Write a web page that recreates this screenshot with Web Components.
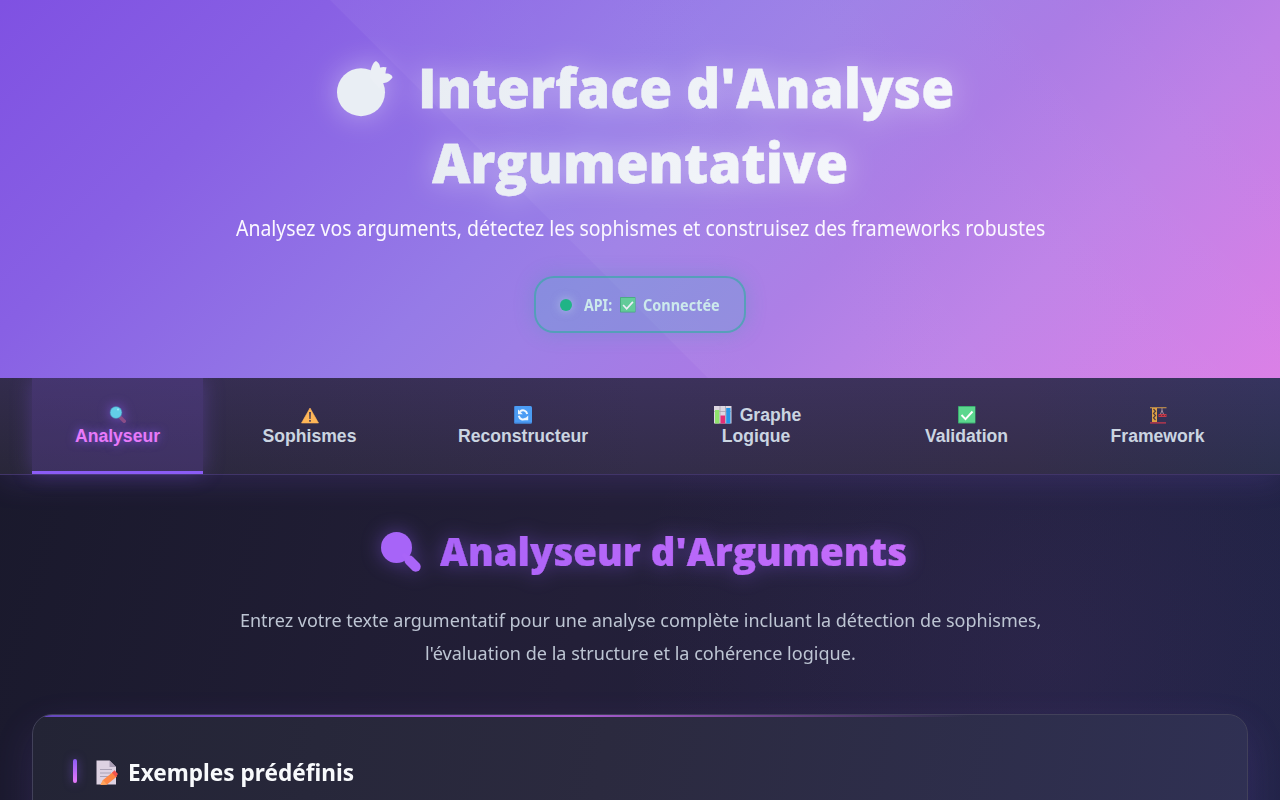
<!DOCTYPE html>
<html lang="fr">
<head>
<meta charset="utf-8">
<title>Interface d'Analyse Argumentative</title>
<style>
html,body{margin:0;height:100%;overflow:hidden}
body{font-family:"Noto Sans","Open Sans",sans-serif;background:#1a1a2e}
</style>
</head>
<body>
<app-shell>
<app-header slot="header"></app-header>
<app-tabs slot="nav"></app-tabs>
<analyzer-panel></analyzer-panel>
</app-shell>
<script>
const icons={
fruit:`<svg viewBox="0 0 56 56"><circle cx="24" cy="31.2" r="24" fill="#e9eef4"/><path d="M33 17C33 8 36 1 39 0C42 2 43 4 43 6.500C46 5.500 48 6 49.500 6.300C49 9 48.500 11 48.500 12.500C52 12 55.500 14 55.500 16.500C52 21 49 22 46 22L42 27Z" fill="#ebeff5"/></svg>`,
lens:`<svg viewBox="0 0 40 40"><circle cx="15.500" cy="15.500" r="15.500" fill="#a764f8"/><path d="M28.500 28.500L34.700 34.700" stroke="#aa65f8" stroke-width="10" stroke-linecap="round"/><path d="M22 22l6 6" stroke="#a965f8" stroke-width="5"/></svg>`,
search:`<svg viewBox="0 0 18 18"><path d="M11 11l4.200 4.200" stroke="#8a4d87" stroke-width="3.600" stroke-linecap="round"/><circle cx="7" cy="6.500" r="6" fill="#62cfe8" stroke="#4a76a6" stroke-width=".6"/><circle cx="9" cy="3.500" r=".9" fill="#a5edfa"/></svg>`,
warning:`<svg viewBox="0 0 18 18"><path d="M9 2L17.500 17H.5Z" fill="#ffb657" stroke="#ffb657" stroke-width=".6" stroke-linejoin="round"/><path d="M8 6h2l-.3 7H8.300zM8.100 14h1.800v1.800H8.100z" fill="#574554"/></svg>`,
refresh:`<svg viewBox="0 0 18 18"><rect width="18" height="17.500" rx="1.500" fill="#4b9cf4"/><path d="M.5 .5V17H17.500" fill="none" stroke="#4283d5"/><path d="M6 5.500C9 3.200 12.500 4.500 13.200 8M4.800 9.800C5.500 13.300 9 14.600 12 12.200" fill="none" stroke="#eef7ff" stroke-width="2"/><path d="M4 3.500V8.300H8.800zM14.200 9.500v4.800H9.400z" fill="#eef7ff"/></svg>`,
chart:`<svg viewBox="0 0 18 18"><rect width="17.500" height="17.500" fill="#ddd7e1"/><path d="M0 5.500H17M6 0V17M11.500 0V17" stroke="#aaa2b1" stroke-width=".8"/><path d="M1 4h4.300v13.500H1z" fill="#8fe36d"/><path d="M6.500 9.500H11v8H6.500z" fill="#e52f76"/><path d="M12.200 2H16.500v15.500h-4.300z" fill="#2697e8"/></svg>`,
check:`<svg viewBox="0 0 18 18"><rect width="17.500" height="17.500" rx=".8" fill="#3cad70"/><rect x="1" y="1" width="16" height="15.500" fill="#5bd78e"/><path d="M3.500 9l4 4.200L14.500 5.500" fill="none" stroke="#fff" stroke-width="1.900"/></svg>`,
crane:`<svg viewBox="0 0 18 18"><path d="M1 1.700H17.500" stroke="#be8d4a" stroke-width="1.200"/><path d="M3 2H8V16H3z" fill="#dfa244"/><path d="M4.500 3l2 2.200-2 2.200 2 2.200-2 2.200 2 2.200" stroke="#4c3942" stroke-width="1.200" fill="none"/><path d="M13 2V5M11.500 8L13 4.500L14.500 8" stroke="#a48b9c" fill="none"/><path d="M9.500 8H17.500v3h-8z" fill="#c63a4a"/><path d="M10 9.500h7" stroke="#762e40" stroke-dasharray="2 1"/><path d="M1 16.900H17" stroke="#d1394d" stroke-width="1.200"/></svg>`,
note:`<svg viewBox="0 0 22 25"><path d="M.5 .5H13.500L20 7V24.500H.5z" fill="#ddd2e2"/><path d="M13.500 .5V7H20z" fill="#aa9eb5"/><path d="M4 9.500h12M4 13h11M4 16.500h8" stroke="#aaa1b5" stroke-width="1.100"/><path d="M7 20L17 12L21 16.500L11 24.500L4.500 25z" fill="#ff8744"/><path d="M16 12.800L18.500 10.200L22 14L19.800 17z" fill="#f4544d"/><path d="M7 20L11 24.500L4.500 25z" fill="#ffa55c"/></svg>`
};
function define(name,css,html,setup){
  customElements.define(name,class extends HTMLElement{
    constructor(){super();this.attachShadow({mode:'open'}).innerHTML=`<style>*,:host{box-sizing:border-box}${css}</style>${html}`}
    connectedCallback(){if(setup)setup(this)}
  });
}
define('ui-icon',':host{display:inline-block;flex:none;width:18px;height:18px}svg{display:block;width:100%;height:100%;overflow:visible}','<span></span>',el=>{
  el.shadowRoot.querySelector('span').innerHTML=icons[el.getAttribute('name')]||'';
});
/* Condenses or widens a single line of text so that it fills the requested width. */
define('fit-text',':host{display:block;white-space:nowrap}span{display:inline-block;transform-origin:0 50%}:host([grad]) span{background:var(--grad);-webkit-background-clip:text;background-clip:text;color:transparent;padding-bottom:.12em}','<span><slot></slot></span>',el=>{
  const s=el.shadowRoot.querySelector('span'),w=+el.getAttribute('w');
  s.style.transform=`scaleX(${w/s.offsetWidth})`;
  el.style.width=w+'px';
});
define('status-pill',`:host{display:flex;flex:none;align-items:center;width:212px;height:57px;border:2px solid rgba(46,170,160,.6);border-radius:20px;background:rgba(100,170,210,.33);box-shadow:0 0 20px rgba(60,150,180,.28);padding-left:24px;color:#cce9ec;font-size:15.200px;font-weight:700}
i{width:12px;height:12px;border-radius:50%;background:#20b486;box-shadow:0 0 10px rgba(210,240,240,.5);margin-right:12px}
ui-icon{width:16px;height:16px;margin:0 7px 0 8px;opacity:.85}`,
`<i></i><fit-text w="28">API:</fit-text><ui-icon name="check"></ui-icon><fit-text w="77">Connectée</fit-text>`);
define('app-header',`:host{display:flex;flex:none;flex-direction:column;align-items:center;height:378px;padding-top:50px;
background:linear-gradient(45deg,transparent 42.650%,rgba(255,255,255,.045) 42.750%,rgba(255,255,255,.03) 70%,transparent),linear-gradient(135deg,#7f51e2 0%,#8860e4 20%,#967be7 44%,#9d7fe6 52%,#aa7ae5 66%,#bd80e7 79%,#da7de6 100%)}
h1{margin:0;height:150px;font-family:"Open Sans","Noto Sans",sans-serif;font-kerning:none;font-size:54.500px;line-height:75px;font-weight:800;display:flex;flex-direction:column;align-items:center;filter:drop-shadow(0 0 15px rgba(255,255,255,.4));--grad:linear-gradient(100deg,#e8edf3,#f5f7fb)}
fit-text[grad]{-webkit-text-stroke:.3px #eef1f7}
.l{display:flex;height:75px}.l ui-icon{width:56px;height:56px;margin:11px 25px 0 0}.l.a{margin-left:10px}
p{margin:10px 0 30px;font-size:21px;line-height:36px;color:#fbf8ff}`,
`<h1><div class="l a"><ui-icon name="fruit"></ui-icon><fit-text grad w="536">Interface d'Analyse</fit-text></div><div class="l"><fit-text grad w="416">Argumentative</fit-text></div></h1>
<p><fit-text w="809">Analysez vos arguments, détectez les sophismes et construisez des frameworks robustes</fit-text></p><status-pill></status-pill>`);
define('app-tab',`:host{display:flex;flex-direction:column;align-items:center;padding-top:27px;height:96px;font:700 17.600px/21px "Liberation Sans",sans-serif;color:#cbd5e1}
.r{display:flex;height:21px;gap:8px}.r ui-icon{margin-top:1px}:host([icon=chart]) .r{margin-left:3px}
:host([active]){background:rgba(139,92,246,.2);border-bottom:3px solid #8b5cf6;box-shadow:0 0 20px rgba(139,92,246,.3);color:#e879f9;text-shadow:0 0 10px rgba(139,92,246,.8)}
:host([active]) ui-icon{filter:drop-shadow(0 0 6px rgba(139,92,246,.7))}`,
`<div class="r"><ui-icon></ui-icon><slot name="lead"></slot></div><slot></slot>`,
el=>{const i=el.shadowRoot.querySelector('ui-icon');i.setAttribute('name',el.getAttribute('icon'));i.connectedCallback()});
define('app-tabs',`:host{display:grid;flex:none;grid-template-columns:171px 181px 214px 220px 169px 181px;column-gap:16px;height:97px;padding:0 32px;border-bottom:1px solid #413569;background:linear-gradient(180deg,rgba(139,92,246,.11),rgba(90,70,130,.01)),linear-gradient(90deg,#282638,#322c48 50%,#332d48 80%,#2b2f4c);box-shadow:0 4px 30px rgba(139,92,246,.18);clip-path:inset(0 0 -50px 0)}`,
`<app-tab active icon="search">Analyseur</app-tab>
<app-tab icon="warning">Sophismes</app-tab>
<app-tab icon="refresh">Reconstructeur</app-tab>
<app-tab icon="chart"><span slot="lead">Graphe</span>Logique</app-tab>
<app-tab icon="check">Validation</app-tab>
<app-tab icon="crane">Framework</app-tab>`);
define('example-card',`:host{display:block;flex:none;height:400px;border:1px solid #42415a;border-radius:20px;background:linear-gradient(100deg,#232435,#2b2a3f 45%,#303155);box-shadow:0 15px 40px rgba(139,92,246,.14);overflow:hidden}
.bar{height:2px;background:linear-gradient(90deg,#6448be,#a75bd0 45%,transparent 77%)}
h3{margin:43px 0 0 40px;display:flex;align-items:flex-start;height:32px;font-size:23px;line-height:32px;font-weight:700;color:#f8fafc}
i{width:4px;height:24px;border-radius:2px;background:linear-gradient(#8b5cf6,#e879f9);box-shadow:0 0 10px rgba(139,92,246,.55);margin:-1px 19px 0 0}
ui-icon{width:22px;height:25px;margin:0 10px 0 0}fit-text{margin-top:-4px}`,
`<div class="bar"></div><h3><i></i><ui-icon name="note"></ui-icon><fit-text w="226">Exemples prédéfinis</fit-text></h3>`);
define('analyzer-panel',`:host{display:flex;flex:none;flex-direction:column;padding:48px 32px 0}
h2{margin:0 0 0 8px;align-self:center;display:flex;height:60px;font-family:"Open Sans","Noto Sans",sans-serif;font-kerning:none;font-size:39px;line-height:60px;font-weight:800;filter:drop-shadow(0 0 10px rgba(139,92,246,.45));--grad:linear-gradient(90deg,#aa63f8,#c66cfa)}
h2 ui-icon{width:40px;height:40px;margin:9px 19px 0 0}h2 fit-text{margin-top:-2px;-webkit-text-stroke:.2px #b768f9}
.d{margin:20px 0 45px;display:flex;flex-direction:column;align-items:center;font-size:18.700px;line-height:33px;color:#bdc5d3}`,
`<h2><ui-icon name="lens"></ui-icon><fit-text grad w="467">Analyseur d'Arguments</fit-text></h2>
<div class="d"><fit-text w="801">Entrez votre texte argumentatif pour une analyse complète incluant la détection de sophismes,</fit-text><fit-text w="431">l'évaluation de la structure et la cohérence logique.</fit-text></div><example-card></example-card>`);
define('app-shell',`:host{display:flex;flex-direction:column;height:800px;overflow:hidden;background:radial-gradient(circle at 82% 82%,rgba(200,90,220,.06),transparent 35%),linear-gradient(105deg,#18182a,#231f38 50%,#1f2345)}`,
`<slot name="header"></slot><slot name="nav"></slot><slot></slot>`);
</script>
</body>
</html>
